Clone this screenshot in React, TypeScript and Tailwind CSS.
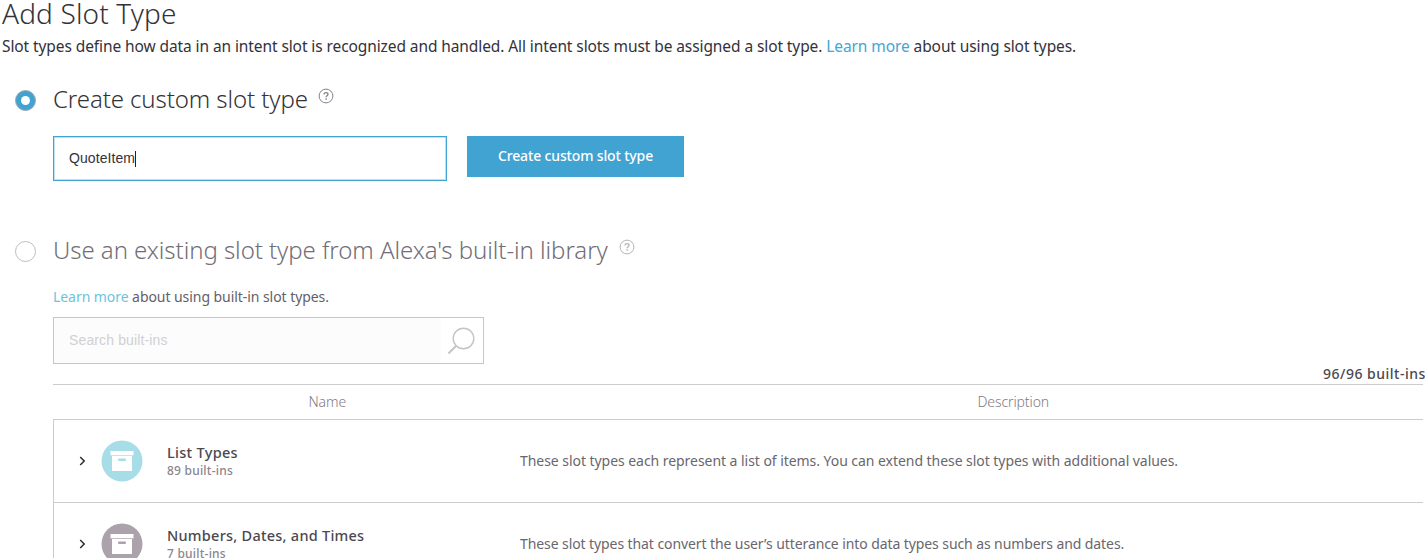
type RowProps = { title: string; count: string; description: string; circle: string; spacing: string; textSpacing: string };

function HelpIcon({ className }: { className: string }) {
  return (
    <svg className={className} width="16" height="16" viewBox="0 0 16 16" fill="none" stroke="currentColor">
      <circle cx="8" cy="8" r="6.9" strokeWidth="1" />
      <path d="M6 6.5C6 5.3 6.9 4.6 8 4.6s2 .7 2 1.7c0 1.4-1.9 1.5-1.9 2.9" strokeWidth="1.3" />
      <path d="M8.1 10.3v1.4" strokeWidth="1.4" />
    </svg>
  );
}

function BoxIcon({ color }: { color: string }) {
  return (
    <svg className={color} width="42" height="42" viewBox="0 0 42 42">
      <circle cx="21" cy="21" r="20.5" fill="currentColor" />
      <path d="M9.5 11h23v4.3h-23z" fill="#fff" />
      <path d="M11 16h20v15H11z" fill="#fff" />
      <rect x="17" y="18.6" width="8" height="2.4" rx="1" fill="currentColor" />
    </svg>
  );
}

function Row({ title, count, description, circle, spacing, textSpacing }: RowProps) {
  return (
    <div className="flex h-[83px] shrink-0 items-center border-b border-[#cccccc] pl-[25px]">
      <svg className="mr-[15px] shrink-0" width="7" height="10" viewBox="0 0 7 10" fill="none" stroke="#2b2b30" strokeWidth="1.5">
        <path d="M1.2 1l4 4-4 4" />
      </svg>
      <BoxIcon color={circle} />
      <div className="ml-6 w-[353px] shrink-0">
        <div className={`text-[14.5px] leading-5 font-medium text-[#4b484f] ${spacing}`}>{title}</div>
        <div className="text-[12px] leading-[18px] font-medium tracking-[0.22px] text-[#8a858c]">{count}</div>
      </div>
      <div className={`text-[14px] leading-5 text-[#6a666d] ${textSpacing}`}>{description}</div>
    </div>
  );
}

export default function App() {
  return (
    <div className="flex h-[558px] w-[1425px] flex-col overflow-hidden bg-white font-['Noto_Sans',sans-serif] whitespace-nowrap text-[#33323a]">
      <h1 className="ml-0.5 h-[34px] shrink-0 text-[28px] leading-[27px] font-light tracking-[0.15px]">Add Slot Type</h1>
      <p className="ml-0.5 text-[15.5px] leading-6 tracking-[-0.094px]">
        Slot types define how data in an intent slot is recognized and handled. All intent slots must be assigned a slot type.{' '}
        <span className="text-[#45a5d3]">Learn more</span> about using slot types.
      </p>

      <div className="mt-[22px] flex h-10 shrink-0 items-center pl-[15px]">
        <span className="flex size-[21px] items-center justify-center rounded-full border border-[#a6a6ae] bg-[#40a3d2]">
          <span className="size-[9px] rounded-full bg-white" />
        </span>
        <h2 className="ml-[17px] pb-0.5 text-[24px] leading-[38px] font-light tracking-[-0.1px]">Create custom slot type</h2>
        <HelpIcon className="mb-2 ml-2.5 text-[#85828a]" />
      </div>

      <div className="mt-4 ml-[53px] flex shrink-0 items-start gap-5">
        <div className="flex h-[45px] w-[394px] items-center border border-[#40a3d2] pl-[15px] font-['Liberation_Sans',sans-serif] text-[14px] inset-shadow-[0_0_0_1px_#bfe0f0]">
          <span className="tracking-[0.08px]">QuoteItem</span>
          <span className="h-4 w-px bg-[#222222]" />
        </div>
        <button className="h-[41px] w-[217px] bg-[#40a3d2] pb-0.5 text-[14px] font-medium tracking-[-0.15px] text-white">Create custom slot type</button>
      </div>

      <div className="mt-[50px] flex h-10 shrink-0 items-center pl-[15px] text-[#716e76]">
        <span className="size-[21px] rounded-full border border-[#bdbdbd]" />
        <h2 className="ml-[17px] pb-0.5 text-[24px] leading-[38px] font-light tracking-[-0.06px]">Use an existing slot type from Alexa's built-in library</h2>
        <HelpIcon className="mb-2 ml-[11px] text-[#b5b3b8]" />
      </div>

      <p className="mt-3.5 ml-[53px] text-[14px] leading-6 tracking-[-0.06px] text-[#646068]">
        <span className="text-[#6cc3dd]">Learn more</span> about using built-in slot types.
      </p>

      <div className="mt-2 ml-[53px] flex h-[47px] w-[431px] shrink-0 items-center justify-between border border-[#c6c6c6] pr-2 font-['Liberation_Sans',sans-serif] text-[14px] text-[#d0d0d2]">
        <span className="flex h-full w-[387px] items-center bg-[#fcfcfc] pl-[15px] tracking-[0.13px]">Search built-ins</span>
        <svg width="28" height="28" viewBox="0 0 28 28" fill="none" stroke="#c4c4c8" strokeWidth="1.4">
          <circle cx="16.5" cy="11.5" r="10.3" />
          <path d="M9.2 18.8L1.5 26.5" strokeWidth="2" />
        </svg>
      </div>

      <div className="flex h-5 shrink-0 items-center pb-0.5 pl-[1323px] text-[14px] font-medium tracking-[0.5px] text-[#4b484f]">96/96 built-ins</div>

      <div className="ml-[53px] flex w-[1370px] shrink-0 flex-col">
        <div className="flex h-[35px] items-center border-t border-[#cccccc] pb-px text-[14px] font-light text-[#7f7a82]">
          <span className="w-[549px] text-center tracking-[-0.1px]">Name</span>
          <span className="w-[822px] pl-0.5 text-center tracking-[-0.1px]">Description</span>
        </div>
        <div className="border-t border-l border-[#cccccc]">
          <Row title="List Types" count="89 built-ins" description="These slot types each represent a list of items. You can extend these slot types with additional values." circle="text-[#a7dde7]" spacing="tracking-[0.3px]" textSpacing="tracking-[-0.05px]" />
          <Row title="Numbers, Dates, and Times" count="7 built-ins" description="These slot types that convert the user’s utterance into data types such as numbers and dates." circle="text-[#aba2ab]" spacing="tracking-[0.25px]" textSpacing="tracking-[-0.09px]" />
        </div>
      </div>
    </div>
  );
}
